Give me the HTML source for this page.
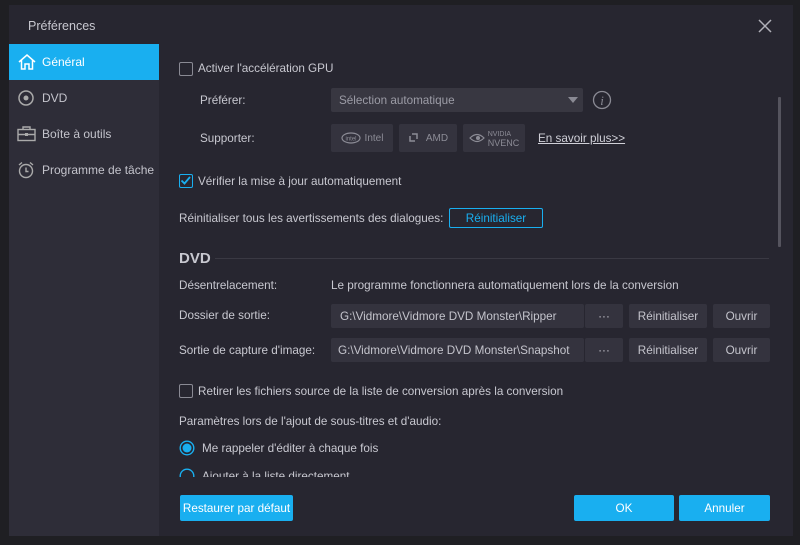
<!DOCTYPE html>
<html><head><meta charset="utf-8"><style>
*{margin:0;padding:0;box-sizing:border-box}
body{width:800px;height:545px;background:#1f1f23;font-family:"Liberation Sans",sans-serif;font-size:11.7px;color:#c8c8d0;position:relative;overflow:hidden}
.a{position:absolute;white-space:nowrap}
#dlg{left:9px;top:5px;width:784px;height:531px;background:#272630}
#side{left:9px;top:44px;width:150px;height:492px;background:#2e2d38}
.nav{left:9px;width:150px;height:36px;display:flex;align-items:center;padding-left:8px;font-size:12px;color:#c4c4cc}
.nav svg{margin-right:5px}
.cb{width:14px;height:14px;border:1.5px solid #8a8a94;border-radius:2px}
.btn{background:#34333e;border-radius:2px;display:flex;align-items:center;justify-content:center;color:#c4c4cc}
.blue{background:#19aff0;color:#fff;border-radius:2px;display:flex;align-items:center;justify-content:center}
</style></head><body>
<div id="dlg" class="a"></div>
<div class="a" style="left:28px;top:19px;font-size:12.5px;color:#c8c8d0">Préférences</div>
<svg class="a" style="left:757px;top:18px" width="16" height="16"><path d="M2 2L14 14M14 2L2 14" stroke="#b0b0b8" stroke-width="1.5"/></svg>
<div id="side" class="a"></div>
<div class="a nav" style="top:44px;background:#19aff0;color:#fff">
<svg width="20" height="18" viewBox="0 0 20 18"><path d="M2 9L10 2L18 9M4.5 7V16H8V11H12V16H15.5V7" fill="none" stroke="#fff" stroke-width="1.5"/></svg>Général</div>
<div class="a nav" style="top:80px"><svg width="20" height="18"><circle cx="9" cy="9" r="7" fill="none" stroke="#aaa" stroke-width="1.5"/><circle cx="9" cy="9" r="2.5" fill="#aaa"/></svg>DVD</div>
<div class="a nav" style="top:116px"><svg width="20" height="18"><rect x="1" y="4.5" width="17" height="11" fill="none" stroke="#aaa" stroke-width="1.4"/><path d="M6 4.5V2H13V4.5M1 9.5H18" stroke="#aaa" stroke-width="1.4" fill="none"/><rect x="8" y="8" width="3" height="3" fill="#aaa"/></svg>Boîte à outils</div>
<div class="a nav" style="top:152px"><svg width="20" height="18"><circle cx="9" cy="10" r="6.5" fill="none" stroke="#aaa" stroke-width="1.4"/><path d="M9 6.5V10.5H11.5M2 4L5 1.5M16 4L13 1.5" stroke="#aaa" stroke-width="1.4" fill="none"/></svg>Programme de tâche</div>

<div class="a cb" style="left:179px;top:62px"></div>
<div class="a" style="left:198px;top:62px">Activer l'accélération GPU</div>
<div class="a" style="left:200px;top:94px">Préférer:</div>
<div class="a" style="left:331px;top:88px;width:252px;height:24px;background:#383741;border-radius:2px;padding:6px 8px;color:#9c9ca6">Sélection automatique</div>
<svg class="a" style="left:568px;top:97px" width="10" height="6"><path d="M0 0H10L5 6Z" fill="#8a8a94"/></svg>
<svg class="a" style="left:592px;top:90px" width="20" height="20"><circle cx="10" cy="10" r="8.5" fill="none" stroke="#8a8a94" stroke-width="1.3"/><text x="10" y="15" text-anchor="middle" font-family="Liberation Serif" font-style="italic" font-size="13" fill="#8a8a94">i</text></svg>
<div class="a" style="left:200px;top:132px">Supporter:</div>
<div class="a btn" style="left:331px;top:124px;width:62px;height:28px;font-size:10px;color:#8c8c96"><svg width="20" height="12" style="margin-right:4px"><ellipse cx="10" cy="6" rx="9" ry="5" fill="none" stroke="#8c8c96" stroke-width="1.2"/><text x="10" y="8.5" text-anchor="middle" font-size="6" fill="#8c8c96">intel</text></svg>Intel</div>
<div class="a btn" style="left:399px;top:124px;width:58px;height:28px;font-size:10px;color:#8c8c96"><svg width="10" height="10" style="margin-right:8px"><path d="M2 3V8H7M4 1H9V6" fill="none" stroke="#8c8c96" stroke-width="1.5"/></svg>AMD</div>
<div class="a btn" style="left:463px;top:124px;width:62px;height:28px;font-size:9px;color:#8c8c96"><svg width="16" height="10" style="margin-right:3px"><path d="M1 5Q8 -2 15 5Q8 12 1 5Z" fill="none" stroke="#8c8c96" stroke-width="1.2"/><circle cx="9" cy="5" r="2" fill="#8c8c96"/></svg><div style="line-height:9px"><span style="font-size:7px">NVIDIA</span><br>NVENC</div></div>
<div class="a" style="left:538px;top:132px;text-decoration:underline;color:#d0d0d8">En savoir plus&gt;&gt;</div>

<div class="a cb" style="left:179px;top:174px;border-color:#19aff0"><svg width="11" height="11" style="position:absolute;left:0;top:0"><path d="M1.5 5.5L4.5 8.5L10 2" stroke="#19aff0" stroke-width="1.8" fill="none"/></svg></div>
<div class="a" style="left:198px;top:175px">Vérifier la mise à jour automatiquement</div>
<div class="a" style="left:179px;top:212px">Réinitialiser tous les avertissements des dialogues:</div>
<div class="a" style="left:449px;top:208px;width:94px;height:20px;border:1px solid #19aff0;border-radius:2px;color:#19aff0;display:flex;align-items:center;justify-content:center">Réinitialiser</div>

<div class="a" style="left:179px;top:250px;font-size:15px;font-weight:bold;color:#c8c8d0">DVD</div>
<div class="a" style="left:215px;top:258px;width:554px;height:1px;background:#3a3943"></div>
<div class="a" style="left:179px;top:279px">Désentrelacement:</div>
<div class="a" style="left:331px;top:279px">Le programme fonctionnera automatiquement lors de la conversion</div>
<div class="a" style="left:179px;top:309px">Dossier de sortie:</div>
<div class="a btn" style="left:331px;top:304px;width:253px;height:24px;justify-content:flex-start;padding-left:9px">G:\Vidmore\Vidmore DVD Monster\Ripper</div>
<div class="a btn" style="left:585px;top:304px;width:38px;height:24px">···</div>
<div class="a btn" style="left:629px;top:304px;width:78px;height:24px">Réinitialiser</div>
<div class="a btn" style="left:713px;top:304px;width:57px;height:24px">Ouvrir</div>
<div class="a" style="left:179px;top:344px">Sortie de capture d'image:</div>
<div class="a btn" style="left:331px;top:338px;width:253px;height:24px;justify-content:flex-start;padding-left:7px">G:\Vidmore\Vidmore DVD Monster\Snapshot</div>
<div class="a btn" style="left:585px;top:338px;width:38px;height:24px">···</div>
<div class="a btn" style="left:629px;top:338px;width:78px;height:24px">Réinitialiser</div>
<div class="a btn" style="left:713px;top:338px;width:57px;height:24px">Ouvrir</div>

<div class="a cb" style="left:179px;top:384px"></div>
<div class="a" style="left:198px;top:385px">Retirer les fichiers source de la liste de conversion après la conversion</div>
<div class="a" style="left:179px;top:415px">Paramètres lors de l'ajout de sous-titres et d'audio:</div>
<svg class="a" style="left:179px;top:440px" width="16" height="16"><circle cx="8" cy="8" r="6.8" fill="none" stroke="#19aff0" stroke-width="1.4"/><circle cx="8" cy="8" r="4.5" fill="#19aff0"/></svg>
<div class="a" style="left:202px;top:442px">Me rappeler d'éditer à chaque fois</div>
<div class="a" style="left:170px;top:465px;width:400px;height:12px;overflow:hidden">
<svg class="a" style="left:9px;top:3px" width="16" height="16"><circle cx="8" cy="8" r="6.8" fill="none" stroke="#19aff0" stroke-width="1.4"/></svg>
<div class="a" style="left:32px;top:5px">Ajouter à la liste directement</div></div>
<div class="a" style="left:778px;top:97px;width:3px;height:150px;background:#55545e;border-radius:1px"></div>

<div class="a blue" style="left:180px;top:495px;width:113px;height:26px">Restaurer par défaut</div>
<div class="a blue" style="left:574px;top:495px;width:100px;height:26px">OK</div>
<div class="a blue" style="left:679px;top:495px;width:91px;height:26px">Annuler</div>
</body></html>
